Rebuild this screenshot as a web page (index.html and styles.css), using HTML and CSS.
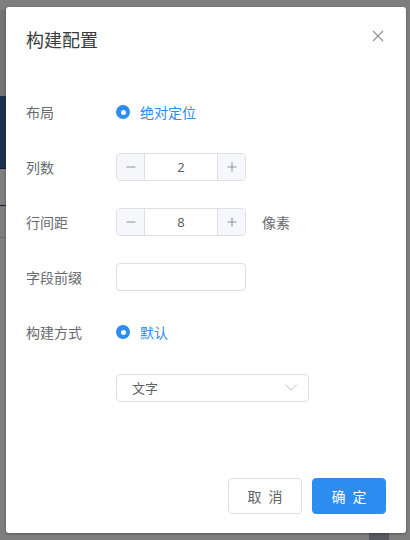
FILE: index.html
```html
<!DOCTYPE html>
<html lang="zh">
<head>
<meta charset="utf-8">
<link rel="stylesheet" href="styles.css">
</head>
<body>
<div class="backdrop">
  <div class="bg-curve"></div>
  <div class="bg-blue"></div>
  <div class="bg-line l1"></div>
  <div class="bg-line l2"></div>
  <div class="bg-line l3"></div>
  <div class="bg-block"></div>
</div>
<div class="overlay">
  <div class="modal">
    <div class="modal-header">
      <span class="modal-title">构建配置</span>
      <svg class="close" width="12" height="12" viewBox="0 0 12 12"><path d="M1 1L11 11M11 1L1 11" stroke="#909399" stroke-width="1.2" fill="none"/></svg>
    </div>
    <div class="modal-body">
      <div class="row">
        <div class="label">布局</div>
        <div class="radio"><span class="radio-dot"></span><span class="radio-text">绝对定位</span></div>
      </div>
      <div class="row">
        <div class="label">列数</div>
        <div class="stepper">
          <span class="step-btn minus"><svg width="10" height="10" viewBox="0 0 10 10"><path d="M0.5 5H9.5" stroke="#8c8f96" stroke-width="1"/></svg></span>
          <span class="step-val">2</span>
          <span class="step-btn plus"><svg width="10" height="10" viewBox="0 0 10 10"><path d="M0.5 5H9.5M5 0.5V9.5" stroke="#8c8f96" stroke-width="1"/></svg></span>
        </div>
      </div>
      <div class="row">
        <div class="label">行间距</div>
        <div class="stepper">
          <span class="step-btn minus"><svg width="10" height="10" viewBox="0 0 10 10"><path d="M0.5 5H9.5" stroke="#8c8f96" stroke-width="1"/></svg></span>
          <span class="step-val">8</span>
          <span class="step-btn plus"><svg width="10" height="10" viewBox="0 0 10 10"><path d="M0.5 5H9.5M5 0.5V9.5" stroke="#8c8f96" stroke-width="1"/></svg></span>
        </div>
        <span class="unit">像素</span>
      </div>
      <div class="row">
        <div class="label">字段前缀</div>
        <div class="input"></div>
      </div>
      <div class="row">
        <div class="label">构建方式</div>
        <div class="radio"><span class="radio-dot"></span><span class="radio-text">默认</span></div>
      </div>
      <div class="row">
        <div class="label"></div>
        <div class="select">
          <span class="select-text">文字</span>
          <svg width="12" height="7" viewBox="0 0 12 7"><path d="M0.5 0.8L6 6L11.5 0.8" stroke="#c0c4cc" stroke-width="1" fill="none"/></svg>
        </div>
      </div>
    </div>
    <div class="modal-footer">
      <button class="btn btn-default">取 消</button>
      <button class="btn btn-primary">确 定</button>
    </div>
  </div>
</div>
</body>
</html>
```
FILE: styles.css
```css
* { box-sizing: border-box; }
html, body { margin: 0; padding: 0; }
body {
  width: 410px;
  height: 540px;
  overflow: hidden;
  background: #ffffff;
  font-family: "Noto Sans CJK SC", "Noto Sans", sans-serif;
  position: relative;
}
.backdrop { position: absolute; inset: 0; background: #fdfdfd; }
.bg-curve {
  position: absolute; left: -60px; top: 10px; width: 130px; height: 90px;
  border-radius: 50%; background: #e6e9ee;
}
.bg-blue { position: absolute; left: 0; top: 96px; width: 20px; height: 72px; background: #38629a; }
.bg-line { position: absolute; left: 0; width: 20px; height: 1px; }
.bg-line.l1 { top: 168px; background: #402080; }
.bg-line.l2 { top: 205px; background: #402080; }
.bg-line.l3 { top: 237px; background: #dadada; }
.bg-block { position: absolute; left: 369px; top: 533px; width: 20px; height: 7px; background: #b0b6c4; }
.overlay {
  position: absolute; inset: 0;
  background: rgba(0, 0, 0, 0.5);
  padding: 7px 0 0 6px;
}
.modal {
  width: 400px;
  height: 526px;
  background: #fff;
  border-radius: 3px;
  box-shadow: 0 1px 3px rgba(0, 0, 0, 0.3);
  display: flex;
  flex-direction: column;
}
.modal-header {
  padding: 20px 20px 0 20px;
  display: flex;
  justify-content: space-between;
  align-items: flex-start;
  height: 44px;
}
.modal-title { font-size: 18px; line-height: 24px; color: #3a3a3a; font-weight: 400; }
.close { margin-top: 3px; margin-right: 2px; }
.modal-body {
  flex: 1;
  padding: 47px 20px 0 20px;
  display: flex;
  flex-direction: column;
  gap: 27px;
}
.row { display: flex; align-items: center; height: 28px; }
.label { width: 90px; flex: none; font-size: 14px; color: #666a70; line-height: 28px; }
.radio { display: flex; align-items: center; }
.radio-dot {
  width: 14px; height: 14px; border-radius: 50%;
  background: #2d8cf0;
  display: flex; align-items: center; justify-content: center;
}
.radio-dot::after {
  content: ""; width: 5px; height: 5px; border-radius: 50%; background: #fff;
}
.radio-text { margin-left: 10px; font-size: 14px; color: #2d8cf0; }
.stepper {
  width: 130px; height: 28px;
  border: 1px solid #dcdfe6; border-radius: 4px;
  display: flex; overflow: hidden;
}
.step-btn {
  width: 28px; flex: none; background: #f5f7fa;
  display: flex; align-items: center; justify-content: center;
}
.step-btn.minus { border-right: 1px solid #dcdfe6; }
.step-btn.plus { border-left: 1px solid #dcdfe6; }
.step-val {
  flex: 1; text-align: center; font-size: 13px; line-height: 26px; color: #606266;
  font-family: "Noto Sans", sans-serif;
}
.unit { margin-left: 16px; font-size: 14px; color: #666a70; }
.input {
  width: 130px; height: 28px;
  border: 1px solid #dcdfe6; border-radius: 4px;
}
.select {
  width: 193px; height: 28px;
  border: 1px solid #dcdfe6; border-radius: 4px;
  display: flex; align-items: center; justify-content: space-between;
  padding: 0 11px 0 15px;
  margin-top: 1px;
}
.select-text { font-size: 13px; color: #606266; }
.modal-footer {
  display: flex; justify-content: flex-end; gap: 10px;
  padding: 0 20px 19px 0;
}
.btn {
  height: 36px; border-radius: 4px; font-size: 14px;
  font-family: "Noto Sans CJK SC", sans-serif;
  padding: 0 0 0 2px; cursor: pointer; letter-spacing: 2px;
}
.btn-default {
  width: 74px; background: #fff; border: 1px solid #dcdfe6; color: #606266;
}
.btn-primary {
  width: 74px; background: #2d8cf0; border: 1px solid #2d8cf0; color: #fff; font-weight: 400;
}
```
